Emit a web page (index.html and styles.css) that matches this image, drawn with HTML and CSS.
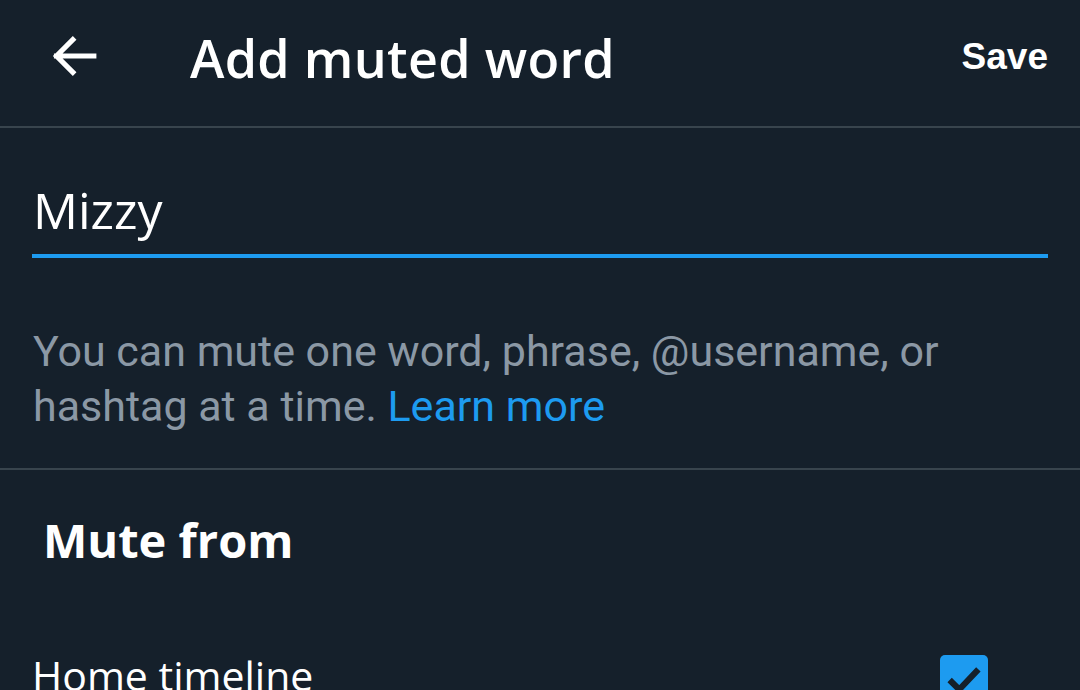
FILE: index.html
```html
<!DOCTYPE html>
<html lang="en">
<head>
    <meta charset="UTF-8">
    <meta name="viewport" content="width=device-width, initial-scale=1.0">
    <title>Add muted word</title>
    <link rel="stylesheet" href="styles.css">
</head>
<body>
    <div class="screen">
        <header class="topbar">
            <button class="back" aria-label="Back">
                <svg viewBox="0 0 24 24" width="56" height="56">
                    <path d="M20.5 12H4.5M11.5 5l-7 7 7 7" fill="none" stroke="#fff" stroke-width="2.2" stroke-linecap="square"/>
                </svg>
            </button>
            <h1 class="title">Add muted word</h1>
            <button class="save">Save</button>
        </header>

        <section class="field">
            <div class="field-value">Mizzy</div>
            <div class="field-line"></div>
            <p class="hint">You can mute one word, phrase, @username, or hashtag at a time. <a href="#" class="link">Learn more</a></p>
        </section>

        <section class="mute-from">
            <h2>Mute from</h2>
            <div class="option">
                <span>Home timeline</span>
                <span class="check">
                    <svg viewBox="0 0 24 24" width="46" height="46">
                        <path d="M4.5 12.5l5 5L19.5 7" fill="none" stroke="#15202b" stroke-width="3.2"/>
                    </svg>
                </span>
            </div>
        </section>
    </div>
</body>
</html>
```

FILE: styles.css
```css
body {
    margin: 0;
    background-color: #15202b;
    font-family: "Open Sans", "Noto Sans", sans-serif;
    color: #ffffff;
    overflow: hidden;
}
.screen {
    width: 1080px;
    height: 690px;
}
.topbar {
    height: 126px;
    display: flex;
    align-items: center;
    padding: 0 32px 0 46px;
    border-bottom: 2px solid #38444d;
}
.back {
    background: none;
    border: none;
    padding: 0;
    display: flex;
    margin-right: 88px;
    margin-top: -14px;
}
.title {
    flex: 1;
    margin: 0;
    font-size: 52px;
    font-weight: 600;
    letter-spacing: 0.3px;
    margin-top: -12px;
}
.save {
    background: none;
    border: none;
    color: #ffffff;
    font-family: "Liberation Sans", sans-serif;
    font-size: 37px;
    font-weight: 700;
    padding: 0;
    margin-top: -12px;
}
.field {
    padding: 50px 32px 34px 32px;
    border-bottom: 2px solid #38444d;
}
.field-value {
    font-size: 50px;
    line-height: 64px;
    padding-left: 1px;
}
.field-line {
    height: 4px;
    background: #1d9bf0;
    margin-top: 12px;
}
.hint {
    margin: 66px 0 0 0;
    font-family: Roboto, sans-serif;
    font-size: 43px;
    line-height: 55px;
    color: #8b98a5;
    padding-left: 1px;
}
.link {
    color: #1d9bf0;
    text-decoration: none;
}
.mute-from {
    padding: 0 32px;
}
.mute-from h2 {
    margin: 38px 0 0 11px;
    font-size: 47px;
    font-weight: 700;
}
.option {
    display: flex;
    justify-content: space-between;
    align-items: flex-start;
    margin-top: 75px;
    font-size: 41px;
    padding-right: 60px;
}
.check {
    width: 48px;
    height: 48px;
    background: #1d9bf0;
    border-radius: 5px;
    display: flex;
    align-items: center;
    justify-content: center;
    margin-top: 8px;
}
```
